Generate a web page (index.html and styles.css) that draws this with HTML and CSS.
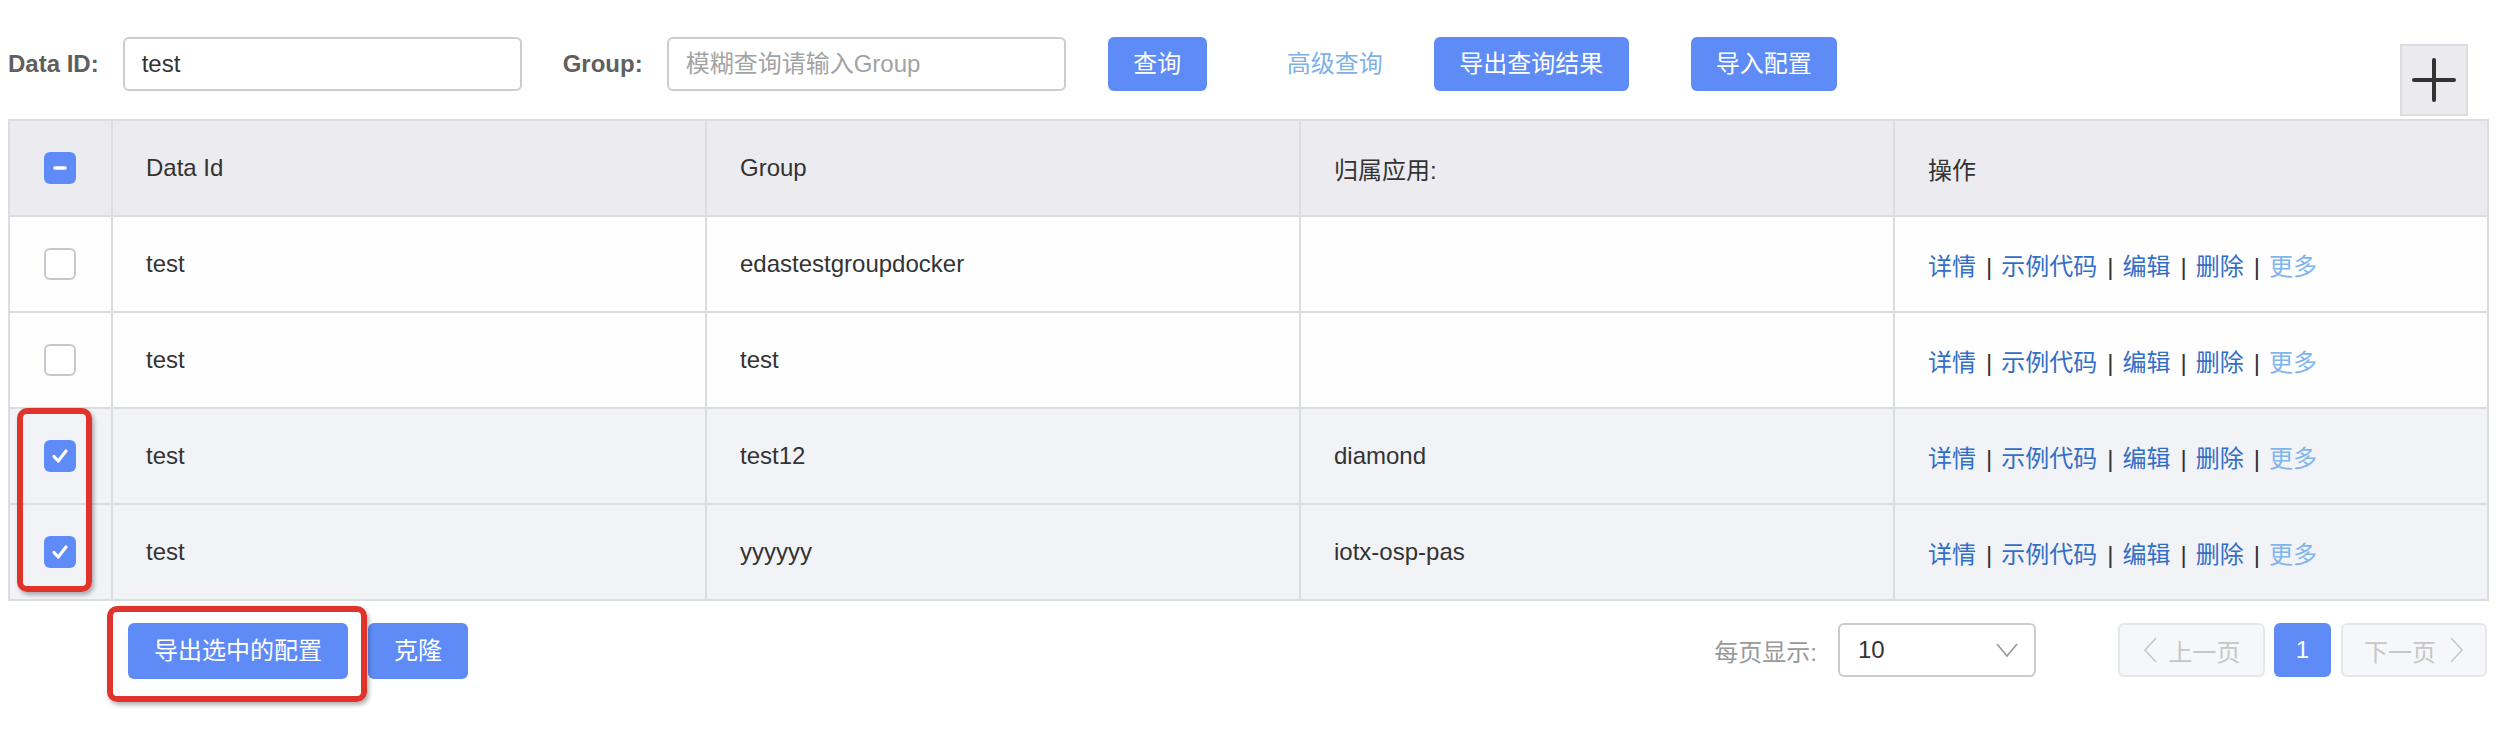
FILE: index.html
```html
<!DOCTYPE html>
<html lang="zh-CN">
<head>
<meta charset="utf-8">
<title>配置列表</title>
<link rel="stylesheet" href="styles.css">
</head>
<body>
<div class="page">
  <div class="toolbar">
    <label class="field-label">Data ID:</label>
    <input class="text-input" type="text" value="test">
    <label class="field-label group-label">Group:</label>
    <input class="text-input" type="text" placeholder="模糊查询请输入Group">
    <button class="btn btn-query">查询</button>
    <a class="link-adv">高级查询</a>
    <button class="btn btn-export">导出查询结果</button>
    <button class="btn btn-import">导入配置</button>
    <button class="add-box" aria-label="add">
      <svg width="44" height="44" viewBox="0 0 44 44"><path d="M22 2V42M2 22H42" stroke="#333" stroke-width="4" stroke-linecap="round"/></svg>
    </button>
  </div>

  <table class="grid">
    <colgroup>
      <col class="c-check"><col class="c-col"><col class="c-col"><col class="c-col"><col class="c-col">
    </colgroup>
    <thead>
      <tr>
        <th class="cell-check"><span class="cb cb-on"><svg width="32" height="32" viewBox="0 0 32 32"><path d="M11 16H21" stroke="#fff" stroke-width="3.5" stroke-linecap="round"/></svg></span></th>
        <th>Data Id</th>
        <th>Group</th>
        <th>归属应用:</th>
        <th>操作</th>
      </tr>
    </thead>
    <tbody>
      <tr>
        <td class="cell-check"><span class="cb"></span></td>
        <td>test</td>
        <td>edastestgroupdocker</td>
        <td></td>
        <td class="ops"><a>详情</a><span class="sep">|</span><a>示例代码</a><span class="sep">|</span><a>编辑</a><span class="sep">|</span><a>删除</a><span class="sep">|</span><a class="more">更多</a></td>
      </tr>
      <tr>
        <td class="cell-check"><span class="cb"></span></td>
        <td>test</td>
        <td>test</td>
        <td></td>
        <td class="ops"><a>详情</a><span class="sep">|</span><a>示例代码</a><span class="sep">|</span><a>编辑</a><span class="sep">|</span><a>删除</a><span class="sep">|</span><a class="more">更多</a></td>
      </tr>
      <tr class="selected">
        <td class="cell-check"><span class="cb cb-on"><svg width="32" height="32" viewBox="0 0 32 32"><path d="M10 16.5L14.2 21L22 11" fill="none" stroke="#fff" stroke-width="3.2" stroke-linecap="round" stroke-linejoin="round"/></svg></span></td>
        <td>test</td>
        <td>test12</td>
        <td>diamond</td>
        <td class="ops"><a>详情</a><span class="sep">|</span><a>示例代码</a><span class="sep">|</span><a>编辑</a><span class="sep">|</span><a>删除</a><span class="sep">|</span><a class="more">更多</a></td>
      </tr>
      <tr class="selected">
        <td class="cell-check"><span class="cb cb-on"><svg width="32" height="32" viewBox="0 0 32 32"><path d="M10 16.5L14.2 21L22 11" fill="none" stroke="#fff" stroke-width="3.2" stroke-linecap="round" stroke-linejoin="round"/></svg></span></td>
        <td>test</td>
        <td>yyyyyy</td>
        <td>iotx-osp-pas</td>
        <td class="ops"><a>详情</a><span class="sep">|</span><a>示例代码</a><span class="sep">|</span><a>编辑</a><span class="sep">|</span><a>删除</a><span class="sep">|</span><a class="more">更多</a></td>
      </tr>
    </tbody>
  </table>

  <div class="footer">
    <div class="footer-left">
      <button class="btn btn-export-sel">导出选中的配置</button>
      <button class="btn btn-clone">克隆</button>
    </div>
    <div class="footer-right">
      <span class="page-size-label">每页显示:</span>
      <div class="select">
        <span>10</span>
        <svg width="22" height="14" viewBox="0 0 22 14"><path d="M1 1L11 13L21 1" fill="none" stroke="#999" stroke-width="1.6"/></svg>
      </div>
      <div class="pager">
        <button class="pg pg-disabled pg-prev"><svg width="14" height="26" viewBox="0 0 14 26"><path d="M13 1L2 13L13 25" fill="none" stroke="#c8c8c8" stroke-width="1.6"/></svg><span>上一页</span></button>
        <button class="pg pg-current">1</button>
        <button class="pg pg-disabled pg-next"><span>下一页</span><svg width="14" height="26" viewBox="0 0 14 26"><path d="M1 1L12 13L1 25" fill="none" stroke="#c8c8c8" stroke-width="1.6"/></svg></button>
      </div>
    </div>
  </div>

  <div class="mark mark-checks"></div>
  <div class="mark mark-export"></div>
</div>
</body>
</html>
```

FILE: styles.css
```css
* { box-sizing: border-box; }
html, body {
  margin: 0;
  padding: 0;
  background: #fff;
}
body {
  font-family: "Liberation Sans", "Noto Sans CJK SC", sans-serif;
  font-size: 24px;
  color: #333;
  width: 2506px;
  height: 734px;
  overflow: hidden;
}
.page {
  position: relative;
  width: 2506px;
  height: 734px;
}

/* toolbar */
.toolbar {
  display: flex;
  align-items: flex-start;
  padding: 37px 38px 0 8px;
  height: 116px;
}
.field-label {
  font-weight: bold;
  color: #5f5f5f;
  height: 54px;
  line-height: 54px;
  margin-right: 24px;
}
.group-label { margin-left: 41px; }
.text-input {
  width: 399px;
  height: 54px;
  border: 2px solid #cdcdcd;
  border-radius: 6px;
  padding: 0 17px;
  font-family: inherit;
  font-size: 24px;
  color: #333;
  outline: none;
}
.text-input::placeholder { color: #a3a3a3; }
.btn {
  height: 54px;
  border: none;
  border-radius: 6px;
  background: #5e8bf6;
  color: #fff;
  font-family: inherit;
  font-size: 24px;
  padding: 0 25px;
  line-height: 54px;
}
.btn-query { margin-left: 42px; width: 99px; }
.link-adv {
  color: #7fb1e8;
  height: 54px;
  line-height: 54px;
  margin-left: 80px;
}
.btn-export { margin-left: 51px; width: 195px; }
.btn-import { margin-left: 62px; width: 146px; }
.add-box {
  margin-left: auto;
  margin-top: 7px;
  width: 68px;
  height: 72px;
  background: #ebebef;
  border: 2px solid #dcdce1;
  padding: 0;
  display: flex;
  align-items: center;
  justify-content: center;
}

/* table */
.grid {
  margin: 3px 0 0 8px;
  width: 2479px;
  border-collapse: collapse;
  table-layout: fixed;
  border: 2px solid #dcdde2;
}
.c-check { width: 103px; }
.c-col { width: 594px; }
.grid th, .grid td {
  height: 96px;
  border: 2px solid #dcdde2;
  padding: 0 33px;
  text-align: left;
  font-weight: normal;
  vertical-align: middle;
  white-space: nowrap;
}
.grid thead th { background: #ebebf0; color: #333; }
.grid tbody td { background: #fefefe; }
.grid tbody tr.selected td { background: #f2f3f7; }
.grid .cell-check {
  padding: 0 0 0 34px;
}
.cb {
  display: block;
  width: 32px;
  height: 32px;
  border: 2px solid #c6c8cf;
  border-radius: 6px;
  background: #fff;
}
.cb-on {
  border: none;
  background: #5e8bf6;
}
.cb svg { display: block; }
.ops { color: #333; }
.ops a { color: #326fc6; }
.ops a.more { color: #82b5ea; }
.ops .sep { margin: 0 9px 0 10px; color: #333; }

/* footer */
.footer {
  display: flex;
  align-items: flex-start;
  padding: 22px 19px 0 128px;
}
.footer-left { display: flex; }
.btn-export-sel { width: 220px; padding: 0; height: 56px; }
.btn-clone { width: 100px; padding: 0; height: 56px; margin-left: 20px; }
.footer-right {
  margin-left: auto;
  display: flex;
  align-items: center;
}
.page-size-label {
  color: #999;
  margin-right: 21px;
}
.select {
  width: 198px;
  height: 54px;
  border: 2px solid #cbcbcb;
  border-radius: 6px;
  display: flex;
  align-items: center;
  justify-content: space-between;
  padding: 0 16px 0 18px;
  color: #333;
}
.pager {
  display: flex;
  margin-left: 82px;
}
.pg {
  height: 54px;
  border-radius: 6px;
  font-family: inherit;
  font-size: 24px;
  display: flex;
  align-items: center;
  justify-content: center;
  padding: 0;
}
.pg-disabled {
  background: #f6f7fa;
  border: 2px solid #e6e7eb;
  color: #c6c6c6;
}
.pg-prev { width: 147px; }
.pg-prev svg { margin-right: 12px; }
.pg-next { width: 146px; }
.pg-next svg { margin-left: 14px; }
.pg-current {
  width: 57px;
  margin: 0 10px 0 9px;
  background: #5e8bf6;
  border: none;
  color: #fff;
}

/* annotation marks */
.mark {
  position: absolute;
  border: 6px solid #e0332c;
  border-radius: 10px;
  box-shadow: 2px 3px 4px rgba(0,0,0,0.3);
}
.mark-checks { left: 17px; top: 408px; width: 75px; height: 184px; }
.mark-export { left: 107px; top: 606px; width: 260px; height: 96px; }
```
